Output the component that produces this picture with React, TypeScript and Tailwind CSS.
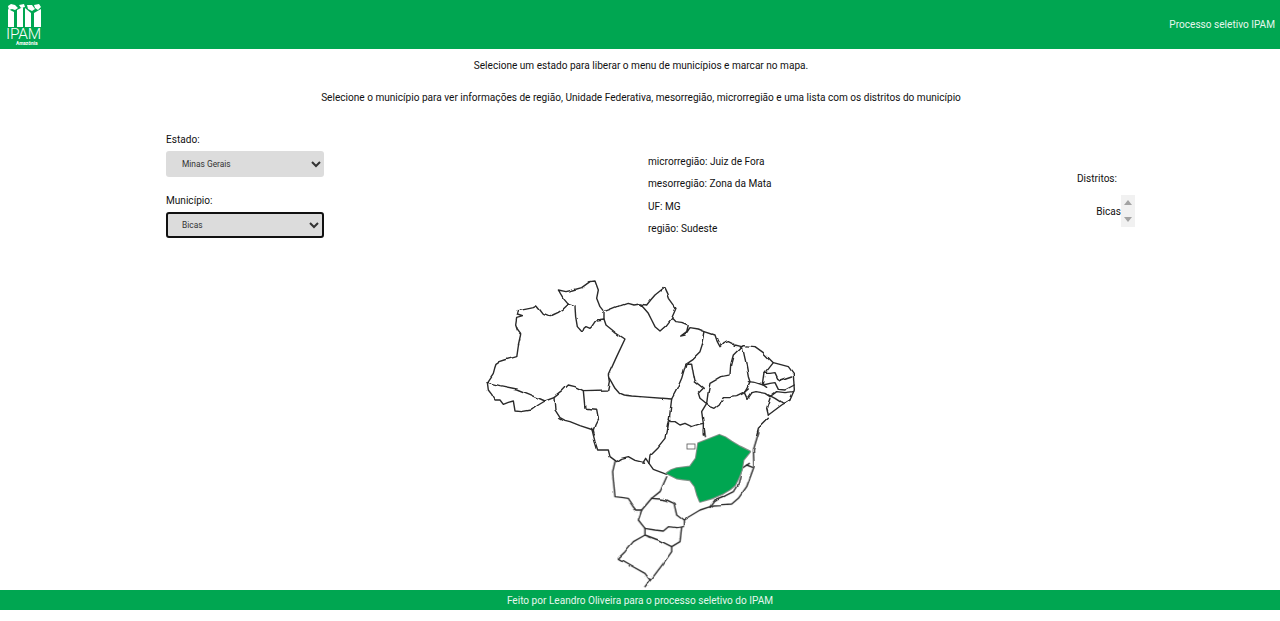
import React from "react";

const Z4 = [
  "M22,322 L30,310 40,295 44,280 48,268 60,260 75,255 92,250 110,245 115,210 122,178 112,165 107,150 110,130 128,125 112,120 115,107 135,103 150,100 160,98 170,93 180,105 190,118 205,124 212,125 218,120 235,112 250,102 265,88",
  "M265,88 L285,95 287,125 292,155 307,172 312,160 318,155 330,160 335,155 345,140 350,135 372,132 378,150 405,172 435,192 410,245 385,300 388,320 383,345 310,347 285,335 265,330 255,340 245,350 222,368 195,378 150,358 110,342 60,332 22,322",
  "M22,322 L25,345 35,358 45,375 60,375 70,388 85,382 100,378 105,408 125,410 155,405 175,390 195,378",
  "M222,368 L225,405 240,428 255,436 270,440 300,452 340,465 343,480",
  "M310,347 L315,400 350,403 355,430 345,450 340,465",
  "M265,88 L250,70 235,45 258,50 280,45 305,38 330,20 345,18 355,45 350,70 360,95 372,110 372,132",
  "M372,110 L390,103 410,95 425,92 445,85 462,90 480,87",
  "M388,310 L395,322 405,340 418,355 430,360 455,363 480,365",
];
const Z5 = [
  "M0,87 L20,90 32,75 45,60 60,48 72,38 80,55 85,70 98,88 108,100 95,130 78,152 60,168 45,155 35,135 25,115 12,100 0,87",
  "M95,130 L105,140 125,142 145,150 140,170 122,183 135,180 150,158 175,162 195,170 225,180 232,200 240,215 250,205 265,200 285,210 305,215",
  "M195,170 L188,205 180,230 160,250 138,265 155,265 160,295 165,320 190,340 175,355 180,370 195,382 200,385",
  "M305,215 L280,240 272,270 270,300 245,305 210,325 204,355 200,385 212,395 225,400 238,390 250,368 270,368 290,365 310,355 325,342",
  "M138,265 L125,310 112,340 95,372 88,430 92,440 105,440 120,450 135,445 155,455 175,448 190,445 185,410 200,385",
  "M88,430 L80,480",
  "M190,445 L190,480",
  "M0,365 L95,372",
  "M385,430 L355,460 350,480",
];
const Z8 = [
  "M20,20 L25,17 60,20 85,38 115,68 160,80 175,100 178,150 165,180 140,195 100,225",
  "M22,20 L32,65 40,110 45,125 35,147 28,158 36,175 48,158",
  "M115,68 L90,100 85,135",
  "M90,100 L105,100 120,98 128,115 135,120 170,108",
  "M85,135 L105,130 120,128 130,148 150,150 178,135",
  "M40,125 L60,127 85,135 95,142",
  "M48,158 L60,155 90,160 105,170 125,155 150,158 176,155",
  "M100,165 L120,175 135,185 150,190 165,180",
  "M105,175 L95,205 100,225",
];
const Z7 = [
  "M50,160 L60,200 68,225 100,225 105,245 125,260 140,250 160,245 180,256 205,262 212,250 222,265",
  "M280,135 L270,190 250,215 225,240 222,265 235,283 275,298",
];
const Z6 = [
  "M45,95 L38,125 40,150 45,200 65,202 85,205 98,225 110,240 125,240 155,205 180,185 200,140",
  "M155,205 L180,207 200,210 222,220 230,255 250,270 275,255 300,240 330,230 345,210",
  "M125,240 L115,270 135,295 165,300 190,303 205,290 230,293 250,290 250,270",
  "M135,295 L135,315 175,330 215,350 240,335 245,290",
  "M135,315 L100,335 75,365 55,385 90,405 135,430 150,450 135,470 160,440 190,400 215,365 215,350",
  "M478,0 L460,60 462,110 440,170 415,205 395,222 365,224 340,225 330,232",
  "M345,210 L375,198 400,185 415,160 425,115 448,100",
  "M440,105 L458,112",
  "M310,0 L313,20",
];
const MG =
  "M200,130 L215,120 230,115 270,110 288,85 292,60 295,40 320,30 358,15 375,22 395,35 420,50 450,65 438,80 430,90 425,120 415,145 405,165 390,178 370,190 335,205 300,215 292,195 285,170 270,150 250,148 230,145 Z";

function Lines({ list, x, y, w = 4.2 }: { list: string[]; x: number; y: number; w?: number }) {
  return (
    <g transform={`translate(${x} ${y}) scale(0.3333)`} fill="none" stroke="#2a2a2a" strokeWidth={w} strokeLinejoin="round" strokeLinecap="round">
      {list.map((d) => (
        <path key={d} d={d} />
      ))}
    </g>
  );
}

function BrazilMap() {
  return (
    <svg viewBox="480 275 320 315" className="mt-[37px] mx-auto block w-[320px] h-[315px]">
      <defs>
        <filter id="soft" x="-15%" y="-15%" width="130%" height="130%">
          <feGaussianBlur stdDeviation="2" />
        </filter>
        <filter id="ink" filterUnits="userSpaceOnUse" x="480" y="275" width="320" height="315">
          <feTurbulence type="fractalNoise" baseFrequency="0.07" numOctaves="2" seed="4" result="n" />
          <feDisplacementMap in="SourceGraphic" in2="n" scale="3" xChannelSelector="R" yChannelSelector="G" />
          <feGaussianBlur stdDeviation="0.4" />
        </filter>
      </defs>
      <g filter="url(#ink)">
        <Lines list={Z4} x={480} y={275} />
        <Lines list={Z5} x={640} y={275} />
        <Lines list={Z8} x={735} y={340} />
        <Lines list={Z7} x={575} y={375} />
        <Lines list={Z6} x={600} y={430} />
      </g>
      <rect x="687" y="444" width="8" height="5" fill="#fff" stroke="#555" strokeWidth="0.8" />
      <g transform="translate(600 430) scale(0.3333)">
        <path d={MG} fill="#fff" stroke="#8b938e" strokeWidth="7" strokeLinejoin="round" filter="url(#soft)" />
        <path d={MG} fill="#00a651" stroke="#00a651" strokeWidth="1" strokeLinejoin="round" filter="url(#soft)" />
      </g>
    </svg>
  );
}

function Logo() {
  return (
    <div className="relative w-[48px] h-[49px] text-white shrink-0">
      <svg viewBox="0 0 48 28" className="absolute left-0 top-0 w-[48px] h-[28px]">
        <g fill="#fff">
          <path d="M7,9 L13,12 L13,27 L7,27 Z" />
          <path d="M16,10 L22,7 L22,27 L16,27 Z" />
          <path d="M24,8 L30,13 L30,27 L24,27 Z" />
          <path d="M33,13 L40,9 L40,27 L33,27 Z" />
          <path d="M7,6 L10,4 L14,5 L17,8 L14,10 L11,9 L8,10 Z" />
          <path d="M18,5 L23,4 L24,7 L20,8 Z" />
          <path d="M26,5 L31,5 L34,9 L31,11 L27,9 Z" />
          <path d="M33,5 L38,4 L40,7 L37,10 L34,8 Z" />
        </g>
      </svg>
      <span className="absolute left-[5px] top-[26px] text-[15.5px] leading-[17px] font-light tracking-[-0.2px]">IPAM</span>
      <span className="absolute left-[15px] top-[41px] text-[4.8px] leading-[5px] font-bold">Amazônia</span>
    </div>
  );
}

export default function App() {
  return (
    <div className="font-['Roboto',sans-serif] text-[10.08px] leading-[12px] text-[#111] bg-white">
      <header className="h-[49px] bg-[#00a651] flex items-center justify-between pl-[1px] pr-[5px] text-[#e6f6ee]">
        <Logo />
        <span>Processo seletivo IPAM</span>
      </header>

      <div className="pt-[11px] pl-[2px] text-center">
        <p>Selecione um estado para liberar o menu de municípios e marcar no mapa.</p>
        <p className="mt-[20px]">Selecione o município para ver informações de região, Unidade Federativa, mesorregião, microrregião e uma lista com os distritos do município</p>
      </div>

      <div className="flex pl-[166px] pr-[145px] mt-[30px]">
        <div className="w-[158px]">
          <label className="block">Estado:</label>
          <select defaultValue="mg" className="block mt-[5px] w-[158px] h-[26px] rounded-[3px] bg-[#dcdcdc] pl-[12px] text-[8.4px] text-[#333] outline-none">
            <option value="mg">Minas Gerais</option>
          </select>
          <label className="block mt-[18px]">Município:</label>
          <select defaultValue="b" className="block mt-[5px] w-[158px] h-[26px] rounded-[3px] border-2 border-[#111] bg-[#dcdcdc] pl-[10px] text-[8.4px] text-[#333] outline-none">
            <option value="b">Bicas</option>
          </select>
        </div>

        <div className="ml-[324px] mt-[22px] flex flex-col gap-[10.4px]">
          <span>microrregião: Juiz de Fora</span>
          <span>mesorregião: Zona da Mata</span>
          <span>UF: MG</span>
          <span>região: Sudeste</span>
        </div>

        <div className="ml-auto mt-[39px] w-[58px]">
          <div>Distritos:</div>
          <div className="mt-[10px] flex justify-end h-[32px]">
            <span className="self-center mt-[2px]">Bicas</span>
            <div className="w-[14px] bg-[#f1f1f1] flex flex-col items-center justify-between py-[5px]">
              <svg width="8" height="5" viewBox="0 0 8 5"><path d="M4,0 L8,5 L0,5 Z" fill="#a3a3a3" /></svg>
              <svg width="8" height="5" viewBox="0 0 8 5"><path d="M0,0 L8,0 L4,5 Z" fill="#a3a3a3" /></svg>
            </div>
          </div>
        </div>
      </div>

      <BrazilMap />

      <footer className="h-[20px] pt-[1px] bg-[#00a651] flex items-center justify-center text-[#e6f6ee]">
        Feito por Leandro Oliveira para o processo seletivo do IPAM
      </footer>
    </div>
  );
}
